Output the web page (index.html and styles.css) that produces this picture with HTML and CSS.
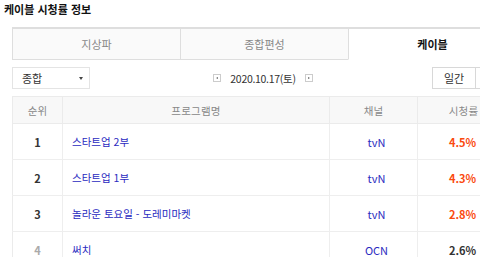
FILE: index.html
```html
<!DOCTYPE html>
<html lang="ko">
<head>
<meta charset="utf-8">
<link rel="stylesheet" href="styles.css">
</head>
<body>
<h1 class="title">케이블 시청률 정보</h1>
<div class="wrap">
  <ul class="tabs">
    <li class="tab">지상파</li>
    <li class="tab">종합편성</li>
    <li class="tab active">케이블</li>
  </ul>
  <div class="controls">
    <div class="select">종합<span class="caret"></span></div>
    <div class="datenav">
      <span class="navbtn prev"></span>
      <span class="date">2020.10.17(토)</span>
      <span class="navbtn next"></span>
    </div>
    <div class="periods">
      <span class="pbtn">일간</span><span class="pbtn">주간</span>
    </div>
  </div>
  <table class="rating">
    <thead>
      <tr><th class="c-rank">순위</th><th class="c-prog">프로그램명</th><th class="c-ch">채널</th><th class="c-rate">시청률</th></tr>
    </thead>
    <tbody>
      <tr><td class="rank">1</td><td class="prog">스타트업 2부</td><td class="ch">tvN</td><td class="rate hot">4.5%</td></tr>
      <tr><td class="rank">2</td><td class="prog">스타트업 1부</td><td class="ch">tvN</td><td class="rate hot">4.3%</td></tr>
      <tr><td class="rank">3</td><td class="prog">놀라운 토요일 - 도레미마켓</td><td class="ch">tvN</td><td class="rate hot">2.8%</td></tr>
      <tr><td class="rank dim">4</td><td class="prog">써치</td><td class="ch">OCN</td><td class="rate">2.6%</td></tr>
    </tbody>
  </table>
</div>
</body>
</html>
```

FILE: styles.css
```css
html, body {
  margin: 0;
  padding: 0;
  background: #fff;
  overflow: hidden;
}
body {
  font-family: "Noto Sans CJK KR", "Noto Sans", sans-serif;
  font-size: 11px;
  color: #333;
  width: 480px;
  height: 257px;
}
.title {
  margin: 0;
  padding: 1px 0 0 4px;
  height: 26px;
  font-size: 11px;
  font-weight: bold;
  line-height: 16px;
  color: #111;
}
.wrap {
  margin-left: 12px;
  width: 504px;
}
.tabs {
  list-style: none;
  margin: 0;
  padding: 0;
  display: flex;
  border-top: 2px solid #dedede;
}
.tab {
  flex: 1;
  height: 31px;
  line-height: 30px;
  text-align: center;
  background: #fafafa;
  color: #888;
  font-size: 11px;
  border-left: 1px solid #dedede;
  border-bottom: 1px solid #dedede;
  box-sizing: border-box;
}
.tab.active {
  background: #fff;
  color: #111;
  font-weight: bold;
  border-bottom-color: transparent;
}
.controls {
  display: flex;
  align-items: center;
  justify-content: space-between;
  margin-top: 7px;
  height: 22px;
}
.select {
  width: 78px;
  height: 22px;
  box-sizing: border-box;
  border: 1px solid #e4e4e4;
  padding-left: 9px;
  line-height: 20px;
  font-size: 11px;
  color: #333;
  position: relative;
}
.caret {
  position: absolute;
  left: 66px;
  top: 9px;
  width: 0;
  height: 0;
  border-left: 2.5px solid transparent;
  border-right: 2.5px solid transparent;
  border-top: 3px solid #444;
}
.datenav {
  display: flex;
  align-items: center;
  gap: 9px;
  margin-left: 3px;
}
.date {
  font-size: 10.5px;
  color: #333;
  letter-spacing: -0.3px;
}
.navbtn {
  width: 8px;
  height: 8px;
  box-sizing: border-box;
  border: 1px solid #ccc;
  position: relative;
}
.navbtn::after {
  content: "";
  position: absolute;
  top: 1.5px;
  width: 0;
  height: 0;
  border-top: 1.5px solid transparent;
  border-bottom: 1.5px solid transparent;
}
.prev::after {
  left: 1.5px;
  border-right: 2px solid #666;
}
.next::after {
  left: 2px;
  border-left: 2px solid #666;
}
.periods {
  display: flex;
  margin-right: -3px;
}
.pbtn {
  width: 44px;
  height: 22px;
  box-sizing: border-box;
  border: 1px solid #d8d8d8;
  text-align: center;
  line-height: 20px;
  font-size: 11px;
  color: #333;
  margin-left: -1px;
}
.rating {
  margin-top: 7px;
  width: 493px;
  border-collapse: collapse;
  table-layout: fixed;
}
.rating th {
  height: 26px;
  background: #f8f8f8;
  color: #888;
  font-weight: normal;
  font-size: 10.5px;
  letter-spacing: 0.2px;
  border: 1px solid #ebebeb;
  padding: 0;
}
.c-rank { width: 49px; }
.c-prog { width: 266px; }
.c-ch { width: 87px; }
.c-rate { width: 91px; }
.rating td {
  height: 35px;
  border: 1px solid #eeeeee;
  padding: 0;
  text-align: center;
  font-size: 11px;
}
.rating tr > :first-child { border-left: 1px solid #ebebeb; }
.rank {
  font-weight: bold;
  color: #333;
}
.rank.dim {
  color: #aaa;
}
.rating td.prog {
  text-align: left;
  padding-left: 9px;
  color: #2a2ac0;
  font-size: 10.5px;
}
.rating td.ch {
  color: #2a2ac0;
  padding-left: 6px;
}
.rating td.rate {
  font-weight: bold;
  color: #333;
  padding-right: 2px;
}
.rating td.rate.hot {
  color: #fa4a0f;
}
```
